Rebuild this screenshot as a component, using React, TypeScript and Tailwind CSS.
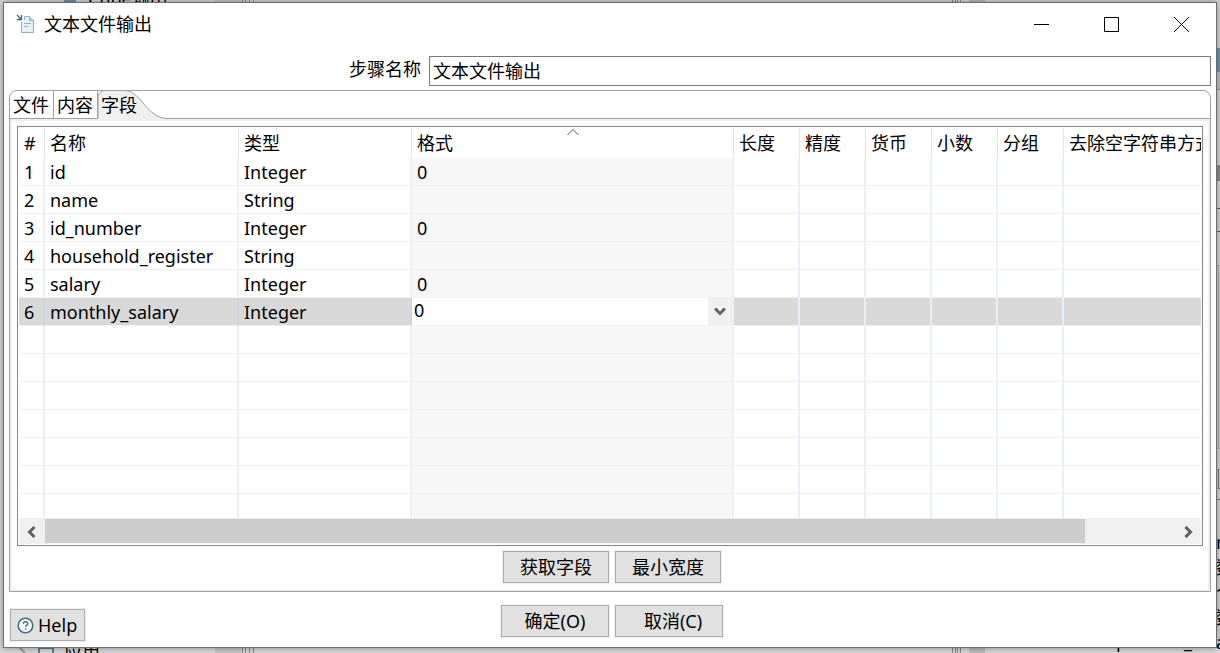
import { useState } from "react";

const columns = ["#", "名称", "类型", "格式", "长度", "精度", "货币", "小数", "分组", "去除空字符串方式"];

const fields = [
	{ name: "id", type: "Integer", format: "0" },
	{ name: "name", type: "String", format: "" },
	{ name: "id_number", type: "Integer", format: "0" },
	{ name: "household_register", type: "String", format: "" },
	{ name: "salary", type: "Integer", format: "0" },
	{ name: "monthly_salary", type: "Integer", format: "0" },
];

const emptyRows = 7;
const tabs = ["文件", "内容", "字段"];

// 裏にあるウィンドウの見えている部分
const Backdrop = () => (
	<div aria-hidden="true" className="absolute inset-0 overflow-hidden bg-[#d6d6d6]">
		<span className="absolute left-[88px] -top-3 leading-5">Cube输出</span>
		<span className="absolute left-[64px] top-0 h-[2px] w-3 bg-[#7391a8]" />
		<span className="absolute left-[215px] top-0 h-full w-[26px] bg-[#c4c4c4]" />
		<span className="absolute left-[242px] top-0 h-full w-[4px] border-x border-[#888]" />
		<span className="absolute left-[249px] top-0 h-full w-[5px] border-x border-[#888]" />
		<span className="absolute left-[952px] top-0 h-full w-[4px] border-x border-[#888]" />
		<span className="absolute left-[957px] top-0 h-full w-[4px] border-x border-[#888]" />
		<span className="absolute left-[969px] top-0 h-full w-4 bg-[#bababa]" />
		<svg className="absolute bottom-0 left-4" width="12" height="8" fill="none" stroke="#999" strokeWidth="2">
			<path d="M1 0L9 8" />
		</svg>
		<span className="absolute left-[38px] top-[647px] h-4 w-4 border-2 border-[#5b7f9b]" />
		<span className="absolute left-[64px] top-[642px] leading-5">应用</span>
		<span className="absolute left-[1116px] top-[631px] leading-5">p</span>
		<span className="absolute left-[1184px] top-[631px] leading-5">_</span>
		<span className="absolute right-0 top-12 h-6 w-[3px] bg-[#6f96b5]" />
		<span className="absolute right-0 top-[72px] h-[18px] w-[3px] border-b border-[#999] bg-[#bdbdbd]" />
		<span className="absolute right-0 top-[165px] h-4 w-[3px] bg-[#8c8c8c]" />
		<span className="absolute right-0 top-[208px] h-6 w-[3px] border-y border-[#666]" />
		<span className="absolute right-0 top-[265px] h-[184px] w-[2px] border-y border-l border-[#aaa]" />
		<span className="absolute right-0 top-[469px] h-5 w-[2px] border-y border-l border-[#777]" />
		<span className="absolute right-0 top-[499px] h-px w-[3px] bg-[#777]" />
		<div className="absolute left-[1216px] top-[530px] flex flex-col leading-[25px]">
			<span>n</span>
			<span>数</span>
			<span>个</span>
			<span>数</span>
			<span>a</span>
		</div>
	</div>
);

const FileIcon = () => (
	<svg width="20" height="20" viewBox="0 0 20 20" fill="none" aria-hidden="true">
		<path d="M5.500 8V18.500H17.500V6.500L13.500 2.500H8.500V6" fill="#e6f1f7" stroke="#8eb0c6" />
		<path d="M13.500 2.500V6.500H17.500" fill="#b9d2e1" stroke="#8eb0c6" />
		<path d="M8 9.500H15M8 12.500H12" stroke="#8eb0c6" />
		<path d="M1 1L5 5M5.500 1V5.500H1" stroke="#3e657f" strokeWidth="1.300" />
	</svg>
);

const buttonStyle = "h-8 border border-[#adadad] bg-[#e1e1e1] text-center outline outline-[#f0f0f0]";
const cell = "border-b border-b-[#f0f0f0] border-r-2 p-0 pl-[5px]";

const App = () => {
	const [stepName, setStepName] = useState("文本文件输出");
	const [tab, setTab] = useState("字段");
	const [format, setFormat] = useState("0");

	return (
		<main className="relative min-h-screen flex flex-col px-[3px] pt-[2px] pb-[5px] font-['Noto_Sans','Noto_Sans_CJK_SC',sans-serif] text-lg leading-6 text-black">
			<Backdrop />
			<div className="relative flex-1 flex flex-col border border-[#6e6e6e] bg-white shadow-[0_0_6px_#00000066]">
				<header className="h-[42px] flex items-center pl-3">
					<FileIcon />
					<h1 className="flex-1 pl-2">文本文件输出</h1>
					<div className="flex h-full">
						<button aria-label="最小化" className="w-[70px] flex items-center justify-center">
							<svg width="15" height="15" stroke="#000" fill="none"><path d="M0 7.500H15" /></svg>
						</button>
						<button aria-label="最大化" className="w-[70px] flex items-center justify-center">
							<svg width="15" height="15" stroke="#000" fill="none"><path d="M.5 .5H14.500V14.500H.5Z" /></svg>
						</button>
						<button aria-label="关闭" className="w-[70px] flex items-center justify-center">
							<svg width="15" height="15" stroke="#000" fill="none"><path d="M0 0L15 15M15 0L0 15" /></svg>
						</button>
					</div>
				</header>

				<div className="flex items-center pt-[11px] pr-[5px]">
					<label htmlFor="step" className="w-[425px] pb-1 pr-2 text-right">步骤名称</label>
					<input
						id="step"
						value={stepName}
						onChange={(e) => setStepName(e.target.value)}
						className="h-[30px] flex-1 border border-[#7a7a7a] px-[3px] pb-[2px] outline-none"
					/>
				</div>

				<section className="mx-[5px] mt-1 flex-1 flex flex-col rounded-t-lg border border-[#a0a0a0]">
					<div role="tablist" className="flex h-7 border-b border-[#a0a0a0]">
						{tabs.map((t) => (
							<button
								key={t}
								role="tab"
								aria-selected={t === tab}
								onClick={() => setTab(t)}
								className={
									t === tab
										? "relative z-10 h-7 w-[70px] pl-[3px] text-left"
										: "h-[27px] w-11 rounded-tl-lg border-r border-[#a0a0a0] pl-[3px] text-left"
								}
							>
								{t === tab && (
									<svg className="absolute left-0 -top-px -z-10" width="72" height="29" viewBox="0 0 72 29" fill="none">
										<path d="M0 29V6Q2 .5 7 .5H27C43 .5 48 28.500 70 28.500V29Z" fill="#f0f0f0" />
										<path d="M0 28V6Q2 .5 7 .5H27C43 .5 48 28.500 70 28.500" stroke="#a0a0a0" />
									</svg>
								)}
								{t}
							</button>
						))}
					</div>

					<div className="flex-1 flex flex-col border-2 border-[#f0f0f0] px-[5px] pt-[5px]">
						<div className="border border-[#828790] p-px">
							<div className="overflow-hidden">
								<table className="w-full table-fixed border-separate border-spacing-0 whitespace-nowrap">
									<colgroup>
										<col className="w-[26px]" />
										<col className="w-[194px]" />
										<col className="w-[173px]" />
										<col className="w-[322px]" />
										<col className="w-[66px]" />
										<col className="w-[66px]" />
										<col className="w-[66px]" />
										<col className="w-[66px]" />
										<col className="w-[66px]" />
										<col />
									</colgroup>
									<thead>
										<tr className="h-[30px]">
											{columns.map((c) => (
												<th
													key={c}
													className="relative overflow-hidden border-r border-[#e5e5e5] p-0 pl-[5px] text-left font-normal last:border-r-0"
												>
													{c}
													{c === "格式" && (
														<svg className="absolute left-1/2 top-0 -translate-x-1/2" width="12" height="8" fill="none" stroke="#555">
															<path d="M.5 7L6 1.500L11.500 7" />
														</svg>
													)}
												</th>
											))}
										</tr>
									</thead>
									<tbody>
										{fields.map((f, i) => (
											<tr key={f.name} className={i === 5 ? "h-7 bg-[#d9d9d9]" : "h-7"}>
												<td className={`${cell} ${i === 5 ? "border-r-[#cdd5df]" : "border-r-[#edf1f7]"}`}>{i + 1}</td>
												<td className={`${cell} ${i === 5 ? "border-r-[#cdd5df]" : "border-r-[#edf1f7]"}`}>{f.name}</td>
												<td className={`${cell} ${i === 5 ? "border-r-[#cdd5df]" : "border-r-[#edf1f7]"}`}>{f.type}</td>
												{i === 5 ? (
													<td className="border-b border-b-[#f0f0f0] border-r-2 border-r-[#e8f0fb] bg-white p-0">
														<div className="relative flex h-[27px]">
															<select
																aria-label="格式"
																value={format}
																onChange={(e) => setFormat(e.target.value)}
																className="w-full appearance-none bg-white pl-[2px] pb-1 outline-none"
															>
																<option value="0">0</option>
																<option value="0.00">0.00</option>
															</select>
															<span className="pointer-events-none absolute right-0 top-0 flex h-full w-6 items-center justify-center bg-[#f0f0f0]">
																<svg width="12" height="9" fill="none" stroke="#606060" strokeWidth="3"><path d="M1 1.500L6 6.500L11 1.500" /></svg>
															</span>
														</div>
													</td>
												) : (
													<td className={`${cell} border-r-[#e8f0fb] bg-[#f7f7f7]`}>{f.format}</td>
												)}
												{columns.slice(4).map((c) => (
													<td key={c} className={`${cell} border-r-[#e8f0fb] last:border-r-0`} />
												))}
											</tr>
										))}
										{Array.from({ length: emptyRows }, (_, i) => (
											<tr key={i} className={i === emptyRows - 1 ? "h-[25px]" : "h-7"}>
												{columns.map((c) => (
													<td
														key={c}
														className={
															c === "格式"
																? `${cell} border-r-[#e8f0fb] bg-[#f7f7f7]`
																: `${cell} border-r-[#e8f0fb] last:border-r-0`
														}
													/>
												))}
											</tr>
										))}
									</tbody>
								</table>
							</div>
							<div className="flex h-[25px] bg-[#f0f0f0]">
								<button aria-label="向左滚动" className="flex w-[26px] items-center justify-center pr-px">
									<svg width="9" height="12" fill="none" stroke="#606060" strokeWidth="3"><path d="M7.500 1L2.500 6L7.500 11" /></svg>
								</button>
								<div className="flex-1">
									<div className="h-6 w-[92%] bg-[#cdcdcd]" />
								</div>
								<button aria-label="向右滚动" className="flex w-[26px] items-center justify-center">
									<svg width="9" height="12" fill="none" stroke="#606060" strokeWidth="3"><path d="M1.500 1L6.500 6L1.500 11" /></svg>
								</button>
							</div>
						</div>
						<div className="flex justify-center gap-[6px] py-[5px] pl-1">
							<button className={`${buttonStyle} w-[106px]`}>获取字段</button>
							<button className={`${buttonStyle} w-[106px]`}>最小宽度</button>
						</div>
					</div>
				</section>

				<footer className="grid grid-cols-[1fr_auto_1fr] items-start px-[6px] pt-[13px] pb-[6px]">
					<div className="pt-1">
						<button className={`${buttonStyle} flex w-[75px] items-center gap-1 pl-[6px]`}>
							<svg width="17" height="17" viewBox="0 0 17 17" fill="none" stroke="#47708c" aria-hidden="true">
								<circle cx="8.500" cy="8.500" r="7.300" fill="#fff" strokeWidth="1.600" />
								<path d="M6.300 6.700C6.300 4 10.800 4 10.800 6.600C10.800 8.200 8.600 8.200 8.600 10M8.600 11.200V12.800" strokeWidth="1.500" />
							</svg>
							Help
						</button>
					</div>
					<div className="flex gap-[6px] pl-1">
						<button className={`${buttonStyle} w-[108px]`}>确定(O)</button>
						<button className={`${buttonStyle} w-[108px] pl-2`}>取消(C)</button>
					</div>
				</footer>
			</div>
		</main>
	);
};

export default App;
